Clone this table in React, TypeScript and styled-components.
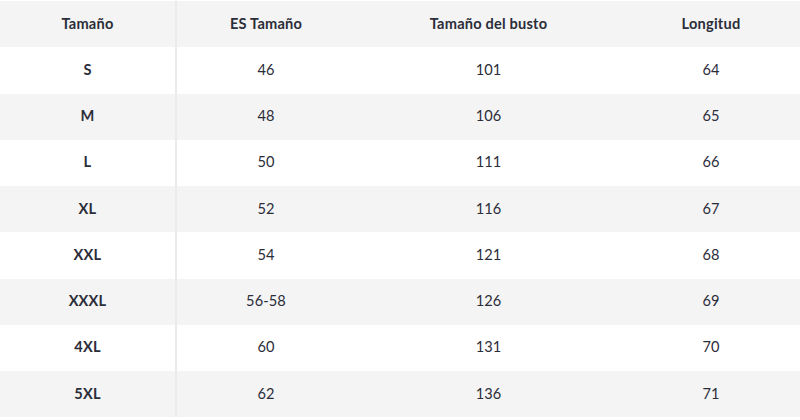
import React from "react";
import styled, { createGlobalStyle } from "styled-components";

const Global = createGlobalStyle`
  html, body { margin: 0; padding: 0; background: #ffffff; }
  body { font-family: Lato, "Open Sans", "Noto Sans", sans-serif; }
`;

const Wrap = styled.div`
  padding-top: 1px;
  width: 800px;
`;

const Table = styled.div`
  display: grid;
  grid-template-columns: 177px 178px 267px 178px;
  grid-auto-rows: 46.25px;
  color: #2b2d39;
  font-size: 14.6px;
`;

const Cell = styled.div<{ $alt: boolean; $head?: boolean; $first?: boolean }>`
  display: flex;
  align-items: center;
  justify-content: center;
  padding-bottom: 2px;
  box-sizing: border-box;
  background: ${(p) => (p.$alt ? "#f4f4f4" : "#ffffff")};
  font-weight: ${(p) => (p.$head || p.$first ? 700 : 400)};
  letter-spacing: ${(p) => (p.$head || p.$first ? "0.2px" : "0.1px")};
  ${(p) => (p.$first ? "border-right: 2px solid #ebebeb;" : "")}
`;

const head = ["Tamaño", "ES Tamaño", "Tamaño del busto", "Longitud"];
const rows = [
  ["S", "46", "101", "64"],
  ["M", "48", "106", "65"],
  ["L", "50", "111", "66"],
  ["XL", "52", "116", "67"],
  ["XXL", "54", "121", "68"],
  ["XXXL", "56-58", "126", "69"],
  ["4XL", "60", "131", "70"],
  ["5XL", "62", "136", "71"],
];

export default function App() {
  return (
    <Wrap>
      <Global />
      <Table>
        {head.map((h, i) => (
          <Cell key={h} $alt $head $first={i === 0}>
            {h}
          </Cell>
        ))}
        {rows.map((r, ri) =>
          r.map((c, ci) => (
            <Cell key={ri + "-" + ci} $alt={ri % 2 === 1} $first={ci === 0}>
              {c}
            </Cell>
          ))
        )}
      </Table>
    </Wrap>
  );
}
